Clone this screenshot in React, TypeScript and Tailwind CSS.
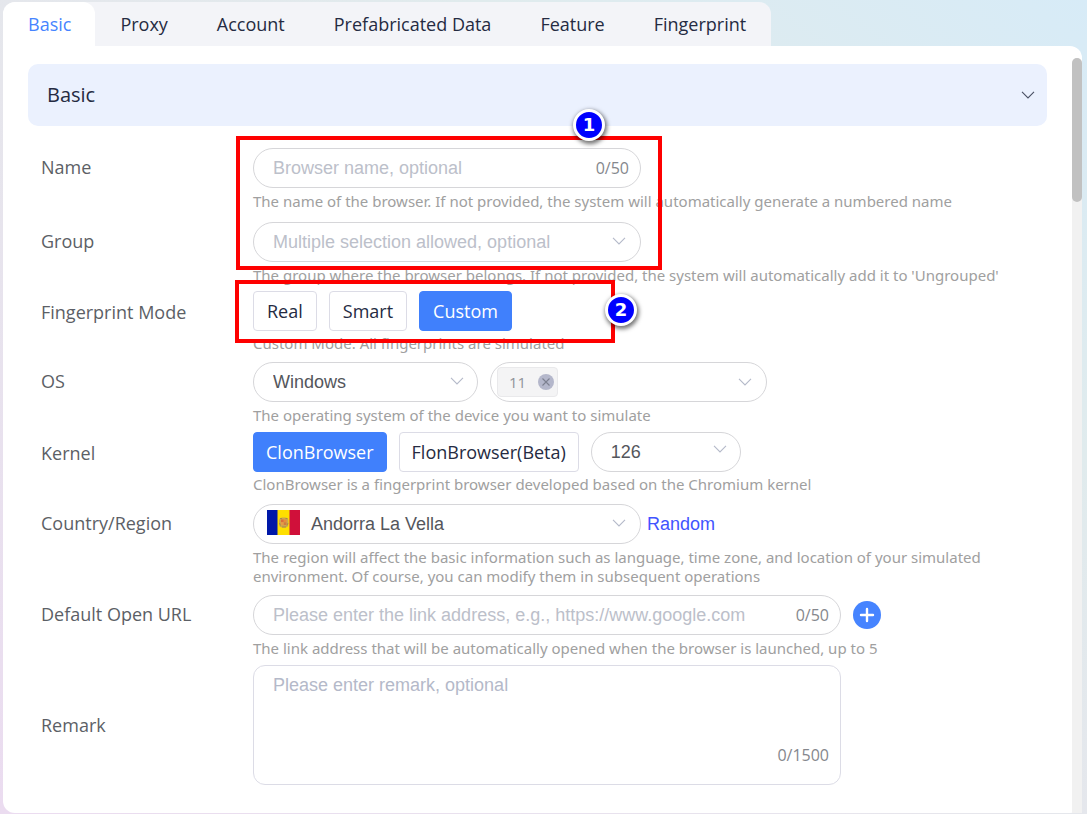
import type { ReactNode } from "react";

const tabs = ["Basic", "Proxy", "Account", "Prefabricated Data", "Feature", "Fingerprint"];

const pill =
  "h-10 w-full appearance-none rounded-full border border-[#d6d6d9] bg-white pl-[19px] font-['Liberation_Sans',sans-serif] text-lg text-[#54565c] outline-none placeholder:text-[#bcc0ca]";

function Chevron({ className = "" }: { className?: string }) {
  return (
    <svg
      viewBox="0 0 14 8"
      className={`pointer-events-none h-2 w-3.5 ${className}`}
      fill="none"
      stroke="currentColor"
      strokeWidth="1.1"
      aria-hidden="true"
    >
      <path d="M1 .8 7 7 13 .8" />
    </svg>
  );
}

function Flag() {
  return (
    <svg viewBox="0 0 33 25" className="pointer-events-none absolute top-[6px] left-[14px] h-[25px] w-[33px]" aria-hidden="true">
      <rect width="11" height="25" fill="#0018a8" />
      <rect x="10.5" width="12.5" height="25" fill="#fedf00" />
      <rect x="22.5" width="10.5" height="25" fill="#d0103a" />
      <rect x="12" y="7.5" width="9.4" height="10" rx="3.5" fill="#cda64e" />
      <path d="M13 8.5h2M18.5 8.5h2M12.5 13l1 2.5M21 13l-1 2.5M15 17h4" stroke="#a98a4a" strokeWidth="1" />
      <rect x="14" y="9.5" width="2.7" height="2.7" fill="#dc6a3c" />
      <rect x="16.8" y="9.5" width="2.7" height="2.7" fill="#e98b3d" />
      <rect x="14" y="12.3" width="2.7" height="2.7" fill="#e99a44" />
      <rect x="16.8" y="12.3" width="2.7" height="2.7" fill="#d07a40" />
    </svg>
  );
}

function Row({
  label,
  htmlFor,
  help,
  className = "",
  tight = false,
  children,
}: {
  label: string;
  htmlFor?: string;
  help?: string;
  className?: string;
  tight?: boolean;
  children: ReactNode;
}) {
  return (
    <div className={`flex items-start ${className}`}>
      <label
        htmlFor={htmlFor}
        className={`w-[212px] shrink-0 text-lg text-[#5c5f66] ${tight ? "leading-[42px]" : "leading-[38px]"}`}
      >
        {label}
      </label>
      <div className="min-w-0 flex-1">
        <div className="flex items-center gap-3">{children}</div>
        {help && (
          <p
            className={`max-w-[780px] font-['Noto_Sans',sans-serif] text-[15px] leading-[19px] text-[#a0a0a0] ${
              tight ? "mt-[3px]" : "mt-1"
            }`}
          >
            {help}
          </p>
        )}
      </div>
    </div>
  );
}

function Choice({
  active = false,
  className = "px-3",
  children,
}: {
  active?: boolean;
  className?: string;
  children: ReactNode;
}) {
  return (
    <button
      type="button"
      aria-pressed={active}
      className={`h-10 rounded border text-lg whitespace-nowrap ${className} ${
        active ? "border-[#4080fc] bg-[#4080fc] text-white" : "border-[#dcdce6] bg-white text-[#252b42]"
      }`}
    >
      {children}
    </button>
  );
}

function Marker({ className, children }: { className: string; children: ReactNode }) {
  return (
    <span
      className={`absolute flex size-8 items-center justify-center rounded-full border-[3px] border-white bg-[#0000fe] font-['DejaVu_Sans',sans-serif] text-lg leading-none font-bold text-white shadow-[1px_2px_4px_1px_rgba(0,0,0,0.55)] ${className}`}
    >
      {children}
    </span>
  );
}

export default function App() {
  return (
    <div className="flex min-h-screen flex-col bg-[linear-gradient(to_bottom_left,#d7ebf7_0%,#e0ebed_28%,#e6e6ec_55%,#ebdcf0_100%)] pt-0.5 pr-[5px] pb-px pl-[3px] font-['Open_Sans','Noto_Sans',sans-serif]">
      <nav className="flex gap-px self-start rounded-t-xl bg-[#f3f4f8]">
        {tabs.map((tab, i) => (
          <a
            key={tab}
            href="#"
            className={`text-lg leading-[44px] whitespace-nowrap ${
              i === 0 ? "rounded-t-xl bg-white pr-6 pl-[25px] text-[#4684ff]" : "px-6 text-[#252b42] last:pr-[25px]"
            }`}
          >
            {tab}
          </a>
        ))}
      </nav>

      <div className="flex flex-1 rounded-xl rounded-tl-none bg-white">
        <main className="min-w-0 flex-1 px-[25px] pt-[18px] pb-7">
          <button
            type="button"
            className="flex h-[62px] w-full items-center justify-between rounded-[10px] bg-[#ebf1fe] pr-3 pl-[19px] text-xl text-[#252b42]"
          >
            Basic
            <Chevron className="text-[#4a5064]" />
          </button>

          <form className="relative mt-[22px] pl-[13px]">
            <Row
              label="Name"
              htmlFor="name"
              help="The name of the browser. If not provided, the system will automatically generate a numbered name"
              className="h-[74px]"
            >
              <div className="relative w-[388px]">
                <input id="name" className={`${pill} pr-16`} placeholder="Browser name, optional" />
                <span className="absolute top-0 right-3 text-base leading-10 text-[#85878d]">0/50</span>
              </div>
            </Row>

            <Row
              label="Group"
              htmlFor="group"
              help="The group where the browser belongs. If not provided, the system will automatically add it to 'Ungrouped'"
              className="h-[69px]"
            >
              <div className="relative w-[388px]">
                <input id="group" className={`${pill} pr-12 placeholder:text-[#b4b9c9]`} placeholder="Multiple selection allowed, optional" />
                <Chevron className="absolute top-[15px] right-[15px] text-[#b4b9c9]" />
              </div>
            </Row>

            <Row label="Fingerprint Mode" help="Custom Mode: All fingerprints are simulated" className="h-[71px]" tight>
              <Choice className="px-[13px]">Real</Choice>
              <Choice className="px-[13px]">Smart</Choice>
              <Choice className="px-[13px]" active>
                Custom
              </Choice>
            </Row>

            <Row label="OS" htmlFor="os" help="The operating system of the device you want to simulate" className="h-[70px]">
              <div className="relative w-[225px]">
                <select id="os" className={pill}>
                  <option>Windows</option>
                </select>
                <Chevron className="absolute top-[15px] right-[14px] text-[#b4b9c9]" />
              </div>
              <div className="flex h-10 w-[277px] items-center justify-between rounded-full border border-[#d6d6d9] pr-[14px] pl-1.5">
                <span className="flex h-[30px] items-center gap-3 rounded border border-[#e9e9eb] bg-[#f4f4f5] pr-[3px] pl-[11px] text-[15px] text-[#909399]">
                  11
                  <button type="button" aria-label="Remove 11" className="flex size-4 items-center justify-center rounded-full bg-[#b4b7cb] text-[#7c8090]">
                    <svg viewBox="0 0 16 16" className="size-4" fill="none" stroke="currentColor" strokeWidth="1.1" aria-hidden="true">
                      <path d="m4.5 4.5 7 7m0-7-7 7" />
                    </svg>
                  </button>
                </span>
                <Chevron className="text-[#b4b9c9]" />
              </div>
            </Row>

            <Row
              label="Kernel"
              htmlFor="kernel"
              help="ClonBrowser is a fingerprint browser developed based on the Chromium kernel"
              className="h-[72px]"
              tight
            >
              <Choice active>ClonBrowser</Choice>
              <Choice>FlonBrowser(Beta)</Choice>
              <div className="relative w-[150px]">
                <select id="kernel" className={pill}>
                  <option>126</option>
                </select>
                <Chevron className="absolute top-[13px] right-[14px] text-[#b4b9c9]" />
              </div>
            </Row>

            <Row
              label="Country/Region"
              htmlFor="country"
              help="The region will affect the basic information such as language, time zone, and location of your simulated environment. Of course, you can modify them in subsequent operations"
              className="h-[91px]"
            >
              <div className="flex items-center gap-1.5">
                <div className="relative w-[388px]">
                  <select id="country" className={`${pill} indent-[38px]`}>
                    <option>Andorra La Vella</option>
                  </select>
                  <Flag />
                  <Chevron className="absolute top-[15px] right-[15px] text-[#b4b9c9]" />
                </div>
                <button type="button" className="font-['Liberation_Sans',sans-serif] text-lg text-[#4154ff]">
                  Random
                </button>
              </div>
            </Row>

            <Row
              label="Default Open URL"
              htmlFor="url"
              help="The link address that will be automatically opened when the browser is launched, up to 5"
              className="h-[70px]"
            >
              <div className="relative w-[588px]">
                <input id="url" className={`${pill} pr-16`} placeholder="Please enter the link address, e.g., https://www.google.com" />
                <span className="absolute top-0 right-3 text-base leading-10 text-[#85878d]">0/50</span>
              </div>
              <button type="button" aria-label="Add URL" className="flex size-7 items-center justify-center rounded-full bg-[#4684ff] text-white">
                <svg viewBox="0 0 28 28" className="size-7" fill="none" stroke="currentColor" strokeWidth="2.4" strokeLinecap="round" aria-hidden="true">
                  <path d="M14 8v12M8 14h12" />
                </svg>
              </button>
            </Row>

            <div className="flex items-center">
              <label htmlFor="remark" className="w-[212px] shrink-0 text-lg text-[#5c5f66]">
                Remark
              </label>
              <div className="relative w-[588px]">
                <textarea
                  id="remark"
                  placeholder="Please enter remark, optional"
                  className="block h-[120px] w-full resize-none rounded-xl border border-[#dcdce6] px-[19px] py-1.5 font-['Liberation_Sans',sans-serif] text-lg leading-[26px] text-[#54565c] outline-none placeholder:text-[#b4b9c9]"
                />
                <span className="absolute right-3 bottom-[18px] text-base text-[#85878d]">0/1500</span>
              </div>
            </div>

            <div className="pointer-events-none absolute -top-3 left-[208px] h-[134px] w-[426px] border-4 border-[#fe0000]">
              <Marker className="-top-[31px] right-[53px]">1</Marker>
            </div>
            <div className="pointer-events-none absolute top-[132px] left-[207px] h-[63px] w-[380px] border-4 border-[#fe0000]">
              <Marker className="top-[10px] -right-[26px]">2</Marker>
            </div>
          </form>
        </main>

        <div className="mt-3 w-2.5 shrink-0 rounded-t-full bg-[#f1f1f1]">
          <div className="h-36 rounded-full bg-[#c1c1c1]" />
        </div>
      </div>
    </div>
  );
}
